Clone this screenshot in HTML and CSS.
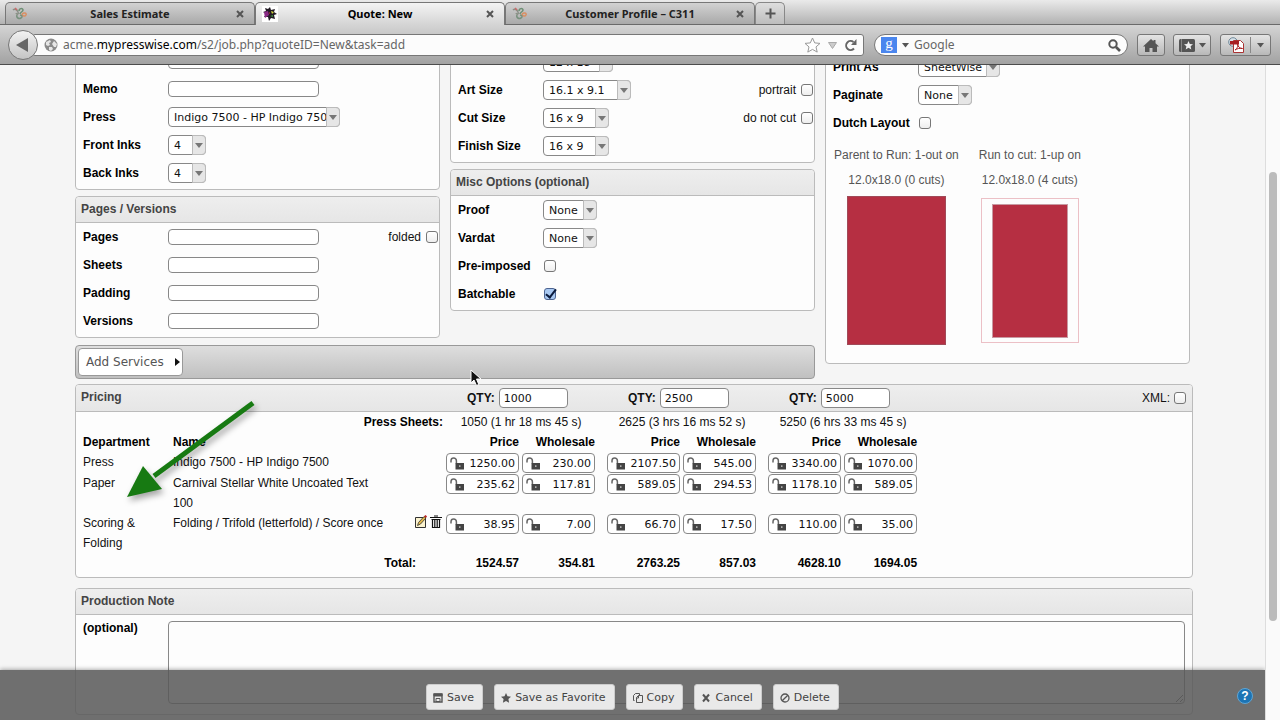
FILE: index.html
```html
<!DOCTYPE html>
<html lang="en">
<head>
<meta charset="utf-8">
<title>Quote: New</title>
<link rel="stylesheet" href="styles.css">
</head>
<body>
<svg class="defs" aria-hidden="true">
  <symbol id="lock" viewBox="0 0 14 13">
    <path d="M1 5.500V3.800a2.700 2.700 0 0 1 5.400 0V6.500" fill="none" stroke="#666" stroke-width="1.500"/>
    <path d="M5.500 6H14v6.500H5.500z" fill="#444"/>
    <path d="M9.200 8.200h1.200v1.800H9.200z" fill="#ccc"/>
  </symbol>
  <symbol id="swirl" viewBox="0 0 16 16">
    <g fill="none" stroke-width="1.500">
      <path d="M1 4c2-2 4 0 5 2s-1 3-2 1" stroke="#8a8f86"/>
      <path d="M7 5c0-3 4-3 4-1s-3 2-3 4" stroke="#6d8f74"/>
      <path d="M10 8c2-2 5-1 4 1s-4 1-4-1" stroke="#d98f62"/>
      <path d="M5 9c-1 3 2 4 4 3s1-3-1-3" stroke="#77907d"/>
      <path d="M3 2l2 2" stroke="#c66"/>
    </g>
  </symbol>
</svg>

<header class="browser">
  <nav class="tabs">
    <div class="tab">
      <svg class="fav" viewBox="0 0 16 16"><use href="#swirl"/></svg>
      <span class="tab-title">Sales Estimate</span>
      <button class="tab-close" aria-label="Close Sales Estimate"><svg viewBox="0 0 8 8"><path d="M1 1l6 6M7 1L1 7"/></svg></button>
    </div>
    <div class="tab active">
      <svg class="fav" viewBox="0 0 16 16"><path d="M0 0h16v16H0z" fill="#fff"/><path d="M3 2l3 1 2-2 1 3 4-1-1 3 3 2-3 1 1 4-4-1-2 3-1-4-4 0 2-3-3-2 3-1z" fill="#211a24"/><path d="M2 6l4-1 1 4-4 3z" fill="#8a2a86"/><path d="M9 5l3 1-2 2z" fill="#cfd23a"/><path d="M8 10l3-1 0 2z" fill="#3c8a3a"/><path d="M7 6l1 1-1 1z" fill="#d33"/></svg>
      <span class="tab-title">Quote: New</span>
      <button class="tab-close" aria-label="Close Quote: New"><svg viewBox="0 0 8 8"><path d="M1 1l6 6M7 1L1 7"/></svg></button>
    </div>
    <div class="tab">
      <svg class="fav" viewBox="0 0 16 16"><use href="#swirl"/></svg>
      <span class="tab-title">Customer Profile – C311</span>
      <button class="tab-close" aria-label="Close Customer Profile"><svg viewBox="0 0 8 8"><path d="M1 1l6 6M7 1L1 7"/></svg></button>
    </div>
    <button class="tab-new" aria-label="New tab"><svg viewBox="0 0 11 11"><path d="M5.500 0.500v10M.5 5.500h10"/></svg></button>
  </nav>
  <div class="toolbar">
    <button class="back" aria-label="Back"><svg viewBox="0 0 12 14"><path d="M12 0v14L0 7z" fill="#666"/></svg></button>
    <div class="address">
      <svg class="globe" viewBox="0 0 14 14"><circle cx="7" cy="7" r="6.500" fill="#8b8b8b"/><path d="M2 4l4-2 1 2-2 1 1 2-2 1-2-1zM8 6l2-3 3 3-1 3-2 0zM5 9l3 0 1 2-2 2-2-1z" fill="#e6e6e6"/></svg>
      <div class="url" role="textbox" aria-label="Address">acme.<b>mypresswise.com</b>/s2/job.php?quoteID=New&amp;task=add</div>
      <button class="plain" aria-label="Bookmark this page"><svg width="17" height="16" viewBox="0 0 17 16"><path d="M8.500 1l2.200 4.900 5.300.5-4 3.500 1.200 5.200-4.700-2.700-4.700 2.700L5 9.900 1 6.400l5.300-.5z" fill="#fff" stroke="#999"/></svg></button>
      <button class="plain" aria-label="Show history"><svg width="9" height="7" viewBox="0 0 9 7"><path d="M.5.5h8l-4 6z" fill="#ccc" stroke="#aaa"/></svg></button>
      <button class="plain" aria-label="Reload"><svg width="14" height="13" viewBox="0 0 14 13"><path d="M10 9.500A4.500 4.500 0 1 1 9.500 3" fill="none" stroke="#666" stroke-width="2"/><path d="M12.500 0v6H7z" fill="#666"/></svg></button>
    </div>
    <form class="search">
      <span class="g">g</span>
      <svg width="7" height="5" viewBox="0 0 7 5"><path d="M0 0h7L3.500 4.500z" fill="#555"/></svg>
      <input type="text" aria-label="Search" placeholder="Google">
      <button class="plain" type="button" aria-label="Go"><svg width="13" height="13" viewBox="0 0 13 13"><circle cx="5" cy="5" r="3.700" fill="none" stroke="#555" stroke-width="2"/><path d="M8 8l4 4" stroke="#555" stroke-width="2.600"/></svg></button>
    </form>
    <button class="tool home" aria-label="Home"><svg width="16" height="13" viewBox="0 0 16 13"><path d="M8 0l2.500 2.300V1h2v3.200L16 7.500h-2V13H9.500V9h-3v4H2V7.500H0z" fill="#555"/></svg></button>
    <button class="tool marks" aria-label="Bookmarks"><svg width="16" height="13" viewBox="0 0 16 13"><rect width="16" height="13" rx="1.500" fill="#555"/><path d="M2.500 0v13" stroke="#888"/><path d="M9.500 2l1.300 2.900 3.200.3-2.400 2.100.7 3.200-2.800-1.700-2.800 1.700.7-3.200L5 5.200l3.200-.3z" fill="#eee"/></svg><svg width="7" height="5" viewBox="0 0 7 5"><path d="M0 0h7L3.500 4.500z" fill="#555"/></svg></button>
    <button class="tool pdf" aria-label="PDF tools"><svg width="16" height="16" viewBox="0 0 16 16"><circle cx="5" cy="5" r="4.300" fill="#d7e2ea" stroke="#6f8797"/><path d="M5.500 3.500h7l3 3V15.500h-10z" fill="#fff" stroke="#a33"/><path d="M2 4h9v3.500H2z" fill="#a81e22"/><path d="M7 13c3-2 3-5 2.500-6 .5 3 2.500 4.500 5 4.500-3-.5-5 0-7.500 1.500z" fill="none" stroke="#a81e22"/></svg><i class="split"></i><svg width="7" height="5" viewBox="0 0 7 5"><path d="M0 0h7L3.500 4.500z" fill="#555"/></svg></button>
  </div>
</header>

<div class="viewport">
  <main class="page">
    <div class="content">
      <div class="columns">
        <div class="stack">
          <section class="panel">
            <div class="row"><span class="name"></span><input class="text" type="text" aria-label="Job name"></div>
            <div class="row"><label class="name" for="memo">Memo</label><input class="text" id="memo" type="text"></div>
            <div class="row"><label class="name" for="press">Press</label><span class="pick w-press"><select id="press"><option>Indigo 7500 - HP Indigo 7500</option></select></span></div>
            <div class="row"><label class="name" for="front">Front Inks</label><span class="pick w-ink"><select id="front"><option>4</option></select></span></div>
            <div class="row"><label class="name" for="backi">Back Inks</label><span class="pick w-ink"><select id="backi"><option>4</option></select></span></div>
          </section>
          <section class="panel">
            <h2>Pages / Versions</h2>
            <div class="row"><label class="name" for="pages">Pages</label><input class="text" id="pages" type="text"><label class="side" for="folded">folded</label><input id="folded" type="checkbox"></div>
            <div class="row"><label class="name" for="sheets">Sheets</label><input class="text" id="sheets" type="text"></div>
            <div class="row"><label class="name" for="padding">Padding</label><input class="text" id="padding" type="text"></div>
            <div class="row"><label class="name" for="versions">Versions</label><input class="text" id="versions" type="text"></div>
          </section>
        </div>

        <div class="stack">
          <section class="panel sizes">
            <div class="row"><span class="name"></span><span class="pick w-run"><select aria-label="Run size"><option>12 x 18</option></select></span></div>
            <div class="row"><label class="name" for="art">Art Size</label><span class="pick w-art"><select id="art"><option>16.1 x 9.1</option></select></span><label class="side" for="portrait">portrait</label><input id="portrait" type="checkbox"></div>
            <div class="row"><label class="name" for="cut">Cut Size</label><span class="pick w-cut"><select id="cut"><option>16 x 9</option></select></span><label class="side" for="nocut">do not cut</label><input id="nocut" type="checkbox"></div>
            <div class="row"><label class="name" for="finish">Finish Size</label><span class="pick w-cut"><select id="finish"><option>16 x 9</option></select></span></div>
          </section>
          <section class="panel">
            <h2>Misc Options (optional)</h2>
            <div class="row"><label class="name" for="proof">Proof</label><span class="pick w-none"><select id="proof"><option>None</option></select></span></div>
            <div class="row"><label class="name" for="vardat">Vardat</label><span class="pick w-none"><select id="vardat"><option>None</option></select></span></div>
            <div class="row"><label class="name" for="pre">Pre-imposed</label><input id="pre" type="checkbox"></div>
            <div class="row"><label class="name" for="batch">Batchable</label><input id="batch" type="checkbox" checked></div>
          </section>
        </div>

        <section class="panel imposition">
          <div class="row"><label class="name" for="printas">Print As</label><span class="pick w-print"><select id="printas"><option>SheetWise</option></select></span></div>
          <div class="row"><label class="name" for="paginate">Paginate</label><span class="pick w-none"><select id="paginate"><option>None</option></select></span></div>
          <div class="row"><label class="name" for="dutch">Dutch Layout</label><input id="dutch" type="checkbox"></div>
          <div class="diagrams">
            <figure><figcaption>Parent to Run: 1-out on<br>12.0x18.0 (0 cuts)</figcaption><div class="sheet-full"></div></figure>
            <figure><figcaption>Run to cut: 1-up on<br>12.0x18.0 (4 cuts)</figcaption><div class="sheet-cut"><div class="sheet-inner"></div></div></figure>
          </div>
        </section>

        <div class="services"><button>Add Services <svg width="5" height="8" viewBox="0 0 5 8"><path d="M0 0v8l5-4z" fill="#111"/></svg></button></div>
      </div>

      <section class="panel pricing">
        <div class="bar">
          <h2>Pricing</h2>
          <div class="qty"><label for="q1">QTY:</label><input id="q1" type="text" value="1000"></div>
          <div class="qty"><label for="q2">QTY:</label><input id="q2" type="text" value="2500"></div>
          <div class="qty"><label for="q3">QTY:</label><input id="q3" type="text" value="5000"></div>
          <div class="xml"><label for="xml">XML:</label><input id="xml" type="checkbox"></div>
        </div>
        <table>
          <colgroup><col class="c-dept"><col class="c-name"><col class="c-act"><col class="c-num"><col class="c-num"><col class="c-gap"><col class="c-num"><col class="c-num"><col class="c-gap"><col class="c-num"><col class="c-num"></colgroup>
          <tbody>
          <tr><th class="r" colspan="3">Press Sheets:</th><td class="mid" colspan="2">1050 (1 hr 18 ms 45 s)</td><td></td><td class="mid" colspan="2">2625 (3 hrs 16 ms 52 s)</td><td></td><td class="mid" colspan="2">5250 (6 hrs 33 ms 45 s)</td></tr>
          <tr><th>Department</th><th>Name</th><th></th><th class="r">Price</th><th class="r">Wholesale</th><th></th><th class="r">Price</th><th class="r">Wholesale</th><th></th><th class="r">Price</th><th class="r">Wholesale</th></tr>
          <tr><td>Press</td><td>Indigo 7500 - HP Indigo 7500</td><td></td>
            <td class="money"><span><svg><use href="#lock"/></svg><input aria-label="Press price 1" value="1250.00"></span></td><td class="money"><span><svg><use href="#lock"/></svg><input aria-label="Press wholesale 1" value="230.00"></span></td><td></td>
            <td class="money"><span><svg><use href="#lock"/></svg><input aria-label="Press price 2" value="2107.50"></span></td><td class="money"><span><svg><use href="#lock"/></svg><input aria-label="Press wholesale 2" value="545.00"></span></td><td></td>
            <td class="money"><span><svg><use href="#lock"/></svg><input aria-label="Press price 3" value="3340.00"></span></td><td class="money"><span><svg><use href="#lock"/></svg><input aria-label="Press wholesale 3" value="1070.00"></span></td></tr>
          <tr><td>Paper</td><td>Carnival Stellar White Uncoated Text 100</td><td></td>
            <td class="money"><span><svg><use href="#lock"/></svg><input aria-label="Paper price 1" value="235.62"></span></td><td class="money"><span><svg><use href="#lock"/></svg><input aria-label="Paper wholesale 1" value="117.81"></span></td><td></td>
            <td class="money"><span><svg><use href="#lock"/></svg><input aria-label="Paper price 2" value="589.05"></span></td><td class="money"><span><svg><use href="#lock"/></svg><input aria-label="Paper wholesale 2" value="294.53"></span></td><td></td>
            <td class="money"><span><svg><use href="#lock"/></svg><input aria-label="Paper price 3" value="1178.10"></span></td><td class="money"><span><svg><use href="#lock"/></svg><input aria-label="Paper wholesale 3" value="589.05"></span></td></tr>
          <tr><td>Scoring &amp; Folding</td><td>Folding / Trifold (letterfold) / Score once</td>
            <td class="actions"><div>
              <button class="plain" aria-label="Edit"><svg width="12" height="13" viewBox="0 0 12 13"><path d="M.5 2.500h10v10H.5z" fill="#fbf3cf" stroke="#333"/><path d="M2.500 10.500l1-3 5.500-6 2 1.500-5.500 6z" fill="#e0b64a" stroke="#333" stroke-width=".8"/><path d="M9 1.500L10.300 0 12 1.300 11 3z" fill="#b22"/></svg></button>
              <button class="plain" aria-label="Remove"><svg width="12" height="13" viewBox="0 0 12 13"><path d="M0 2.500h12M4 1h4M1.500 4.500h9M2.500 4.500v8h7v-8M4.800 5v7M7.200 5v7" fill="none" stroke="#111" stroke-width="1.200"/></svg></button>
            </div></td>
            <td class="money"><span><svg><use href="#lock"/></svg><input aria-label="Scoring price 1" value="38.95"></span></td><td class="money"><span><svg><use href="#lock"/></svg><input aria-label="Scoring wholesale 1" value="7.00"></span></td><td></td>
            <td class="money"><span><svg><use href="#lock"/></svg><input aria-label="Scoring price 2" value="66.70"></span></td><td class="money"><span><svg><use href="#lock"/></svg><input aria-label="Scoring wholesale 2" value="17.50"></span></td><td></td>
            <td class="money"><span><svg><use href="#lock"/></svg><input aria-label="Scoring price 3" value="110.00"></span></td><td class="money"><span><svg><use href="#lock"/></svg><input aria-label="Scoring wholesale 3" value="35.00"></span></td></tr>
          <tr><th class="r total" colspan="3">Total:</th><th class="r">1524.57</th><th class="r">354.81</th><th></th><th class="r">2763.25</th><th class="r">857.03</th><th></th><th class="r">4628.10</th><th class="r">1694.05</th></tr>
          </tbody>
        </table>
      </section>

      <section class="panel note">
        <h2>Production Note</h2>
        <div class="note-body"><label for="note">(optional)</label><textarea id="note"></textarea></div>
      </section>
    </div>

    <footer class="actions-bar">
      <button><svg viewBox="0 0 10 10"><path d="M1 1h8v8H1z" fill="none" stroke="#555" stroke-width="1.400"/><path d="M1 1h8v2H1z" fill="#555" stroke="#555"/><path d="M3 5.500h4v3H3z" fill="none" stroke="#555"/></svg>Save</button>
      <button><svg viewBox="0 0 10 10"><path d="M5 0l1.500 3.300 3.500.4-2.600 2.400.7 3.700L5 8 1.900 9.800l.7-3.700L0 3.700l3.500-.4z" fill="#555"/></svg>Save as Favorite</button>
      <button><svg viewBox="0 0 10 10"><path d="M1.500 7.500h-1v-5l2-2h4v2" fill="none" stroke="#555"/><path d="M5.500 2.500h4v7h-6v-5zM5.500 2.500v2.500H3.500" fill="none" stroke="#555"/></svg>Copy</button>
      <button><svg viewBox="0 0 10 10"><path d="M2 1.500l6 7M8 1.500l-6 7" stroke="#555" stroke-width="2"/></svg>Cancel</button>
      <button><svg viewBox="0 0 10 10"><circle cx="5" cy="5" r="4" fill="none" stroke="#555" stroke-width="1.300"/><path d="M2.200 7.800l5.600-5.600" stroke="#555" stroke-width="1.300"/></svg>Delete</button>
      <a class="help" href="#" aria-label="Help">?</a>
    </footer>
    <svg class="arrow" viewBox="0 0 140 110"><path d="M131 6L32 79" stroke="#177a12" stroke-width="5"/><path d="M5 100L21 69l19 23z" fill="#177a12"/></svg>
    <svg class="cursor" viewBox="0 0 12 18"><path d="M1 1v13l3-3 2.500 5.500 2.300-1L6.500 10H11z" fill="#111" stroke="#fff"/></svg>
  </main>
  <div class="scrollbar"><div class="thumb"></div></div>
</div>
</body>
</html>
```
FILE: styles.css
```css
*, *::before, *::after { box-sizing: border-box; }
html, body { height: 100%; }
body {
  margin: 0;
  display: flex;
  flex-direction: column;
  overflow: hidden;
  background: #f5f5f5;
  color: #111;
  font: 12px/20px "Liberation Sans", Arial, sans-serif;
}
button, input, select, textarea { font: inherit; color: inherit; margin: 0; padding: 0; }
svg { display: block; flex: none; }
.defs { position: absolute; width: 0; height: 0; }
.plain { border: 0; background: none; }

/* Browser window */
.browser { flex: none; font-family: "Noto Sans", "Open Sans", sans-serif; }
.tabs {
  display: flex;
  height: 25px;
  padding: 2px 0 0 5px;
  background: linear-gradient(#eaeaea, #b2b2b2);
  border-bottom: 1px solid #6a6a6a;
}
.tab {
  display: flex;
  align-items: center;
  flex: 0 1 250px;
  height: 22px;
  padding: 0 10px 0 6px;
  border: 1px solid #777;
  border-bottom: 0;
  border-radius: 5px 5px 0 0;
  background: linear-gradient(#d2d2d2, #a9a9a9);
}
.tab.active { height: 23px; background: linear-gradient(#f4f4f4, #d4d4d4); }
.fav { width: 16px; height: 16px; }
.tab-title { flex: 1; margin-right: 4px; text-align: center; font-size: 11px; font-weight: 700; color: #222; }
.tab.active .tab-title { color: #000; }
.tab-close { border: 0; background: none; }
.tab-close svg { width: 8px; height: 8px; stroke: #555; stroke-width: 2; }
.tab-new {
  display: flex;
  align-items: center;
  justify-content: center;
  width: 30px;
  border: 1px solid #888;
  border-bottom: 0;
  border-radius: 5px 5px 0 0;
  background: linear-gradient(#dedede, #bdbdbd);
}
.tab-new svg { width: 11px; height: 11px; stroke: #555; stroke-width: 2; }
.toolbar {
  display: flex;
  align-items: center;
  height: 40px;
  padding: 1px 9px 0 8px;
  background: linear-gradient(#d4d4d4, #a2a2a2);
  border-bottom: 1px solid #4c4c4c;
}
.back {
  display: flex;
  align-items: center;
  justify-content: center;
  width: 30px;
  height: 30px;
  padding-right: 3px;
  border: 1px solid #777;
  border-radius: 50%;
  background: linear-gradient(#f2f2f2, #c4c4c4);
  z-index: 1;
}
.back svg { width: 12px; height: 14px; }
.address {
  display: flex;
  align-items: center;
  flex: 1;
  gap: 7px;
  height: 22px;
  margin: 0 10px 0 -6px;
  padding: 0 5px 0 11px;
  border: 1px solid #777;
  border-radius: 3px;
  background: #fcfcfc;
}
.globe { width: 14px; height: 14px; }
.url { flex: 1; margin-left: -2px; color: #666; }
.url b { font-weight: 400; color: #000; }
.search {
  display: flex;
  align-items: center;
  gap: 5px;
  width: 254px;
  height: 22px;
  margin-right: 9px;
  padding: 0 6px;
  border: 1px solid #777;
  border-radius: 11px;
  background: #fcfcfc;
}
.search input { flex: 1; min-width: 0; border: 0; background: none; }
.search input::placeholder { color: #666; opacity: 1; }
.g { width: 16px; height: 16px; background: #4a86ee; color: #fff; font: 15px/12px "Liberation Serif", serif; text-align: center; }
.tool {
  display: flex;
  align-items: center;
  justify-content: center;
  gap: 6px;
  height: 22px;
  border: 1px solid #777;
  border-radius: 3px;
  background: linear-gradient(#e4e4e4, #b8b8b8);
}
.home { width: 28px; margin-right: 8px; }
.marks { width: 38px; margin-right: 9px; gap: 4px; }
.pdf { width: 51px; }
.split { width: 1px; height: 16px; background: #888; }

/* Scrolled page */
.viewport { flex: 1; min-height: 0; display: flex; }
.page { position: relative; flex: 1; min-width: 0; overflow: hidden; }
.content { margin-top: -19px; padding: 0 72px 0 75px; }
.scrollbar { width: 15px; padding: 107px 3px 0; background: #fafafa; border-left: 1px solid #ddd; }
.thumb { height: 82%; width: 8px; border-radius: 4px; background: #bbb; }

.columns {
  display: grid;
  grid-template-columns: 1fr 1fr 1fr;
  gap: 7px 10px;
  margin-right: 3px;
}
.stack { display: flex; flex-direction: column; gap: 6px; min-width: 0; }
.panel { border: 1px solid #bbb; border-radius: 4px; background: #fdfdfd; padding-bottom: 2px; }
.stack .panel { overflow: hidden; }
.sizes { padding-top: 1px; }
.imposition { grid-column: 3; grid-row: 1 / 3; align-self: start; padding: 6px 0 18px; }
.panel h2 {
  margin: 0;
  height: 26px;
  padding-left: 5px;
  border-bottom: 1px solid #bbb;
  border-radius: 3px 3px 0 0;
  background: linear-gradient(#eee, #e6e6e6);
  font-size: 12px;
  line-height: 24px;
  color: #444;
}
.row { display: flex; align-items: center; height: 28px; padding: 0 1px 0 7px; }
.name { width: 85px; padding-bottom: 1px; font-weight: 700; color: #000; }
.side { margin: 0 5px 0 auto; padding-bottom: 1px; }
.text { width: 151px; height: 16px; border: 1px solid #888; border-radius: 4px; background: #fff; }
.pick { position: relative; height: 20px; font: 11px/18px "DejaVu Sans", Verdana, sans-serif; }
.pick select {
  appearance: none;
  display: block;
  width: 100%;
  height: 20px;
  padding: 1px 13px 0 5px;
  border: 1px solid #888;
  border-radius: 4px;
  background: #fff;
}
.pick::before {
  content: "";
  position: absolute;
  top: 0;
  right: 0;
  width: 14px;
  height: 20px;
  border: 1px solid #bbb;
  border-radius: 0 4px 4px 0;
  background: #e6e6e6;
  pointer-events: none;
}
.pick::after {
  content: "";
  position: absolute;
  top: 8px;
  right: 3px;
  border: 4px solid transparent;
  border-top: 5px solid #777;
  border-bottom: 0;
  pointer-events: none;
}
.w-press { width: 172px; }
.w-ink { width: 38px; }
.w-run { width: 70px; }
.w-art { width: 88px; }
.w-cut { width: 66px; }
.w-none { width: 54px; }
.w-print { width: 82px; }

input[type="checkbox"] {
  appearance: none;
  flex: none;
  width: 12px;
  height: 12px;
  border: 1px solid #777;
  border-radius: 3px;
  background: linear-gradient(#fff, #eee);
}
.name + input[type="checkbox"] { margin-left: 1px; }
input[type="checkbox"]:checked { position: relative; background: #a9c9f2; border-color: #4d6491; }
input[type="checkbox"]:checked::after {
  content: "";
  position: absolute;
  left: 3px;
  top: -2px;
  width: 6px;
  height: 11px;
  border: solid #0b1b3d;
  border-width: 0 2px 2px 0;
  transform: rotate(38deg);
}

.diagrams { display: flex; gap: 20px; padding: 6px 0 0 8px; color: #555; line-height: 25px; text-align: center; }
.diagrams figure { margin: 0; display: flex; flex-direction: column; align-items: center; gap: 3px; }
.sheet-full { width: 99px; height: 149px; background: #b62f42; border: 1px solid #a04a58; }
.sheet-cut { width: 98px; height: 145px; margin-top: 2px; padding: 5px 10px 4px; border: 1px solid #ecc0c6; }
.sheet-inner { height: 100%; background: #b62f42; border: 1px solid #c89aa2; }

.services {
  grid-column: 1 / 3;
  padding: 2px;
  height: 34px;
  border: 1px solid #999;
  border-radius: 4px;
  background: linear-gradient(#dedede, #c0c0c0);
}
.services button {
  display: flex;
  align-items: center;
  gap: 11px;
  height: 28px;
  padding: 0 2px 0 7px;
  border: 1px solid #999;
  border-radius: 4px;
  background: #fff;
  font: 12px/20px "DejaVu Sans", Verdana, sans-serif;
  color: #555;
}

/* Pricing */
.pricing { margin-top: 5px; padding-bottom: 4px; }
.bar {
  display: grid;
  grid-template-columns: 391px 161px 161px 161px 1fr;
  align-items: center;
  height: 27px;
  border-bottom: 1px solid #bbb;
  border-radius: 3px 3px 0 0;
  background: linear-gradient(#eee, #e6e6e6);
}
.bar h2 { border: 0; background: none; }
.qty { display: flex; align-items: center; gap: 4px; font-weight: 700; }
.qty input {
  width: 69px;
  height: 20px;
  padding: 1px 4px 0;
  border: 1px solid #888;
  border-radius: 4px;
  background: #fff;
  font: 11px/18px "DejaVu Sans", Verdana, sans-serif;
}
.xml { display: flex; align-items: center; justify-content: flex-end; gap: 4px; padding-right: 6px; }
table { table-layout: fixed; width: 842px; border-collapse: collapse; }
td, th { padding: 0; text-align: left; vertical-align: top; font-weight: 400; }
th { font-weight: 700; color: #000; }
td:first-child, th:first-child { padding-left: 7px; }
.c-dept { width: 97px; }
.c-name { width: 215px; }
.c-act { width: 56px; }
.c-num { width: 76px; }
.c-gap { width: 9px; }
.r { text-align: right; padding-right: 1px; }
.total { padding-right: 28px; }
.mid { text-align: center; padding-left: 2px; }
.money { padding: 1px 1px 0 2px; }
.money span {
  display: flex;
  align-items: center;
  gap: 2px;
  height: 20px;
  padding: 1px 3px 0;
  border: 1px solid #888;
  border-radius: 4px;
  background: #fff;
}
.money svg { width: 14px; height: 13px; }
.money input {
  flex: 1;
  min-width: 0;
  width: 100%;
  border: 0;
  background: none;
  text-align: right;
  font: 11px/18px "DejaVu Sans", Verdana, sans-serif;
}
.actions div { display: flex; justify-content: flex-end; gap: 3px; padding: 2px 2px 0 0; }

/* Production note */
.note { margin-top: 10px; padding-bottom: 10px; }
.note-body { display: flex; padding: 6px 7px 0; font-weight: 700; color: #000; }
.note-body label { width: 85px; line-height: 14px; }
.note-body textarea { flex: 1; height: 83px; border: 1px solid #888; border-radius: 4px; background: #fdfdfd; font-weight: 400; }

.actions-bar {
  position: absolute;
  left: 0;
  right: 0;
  bottom: 0;
  display: flex;
  justify-content: center;
  gap: 11px;
  height: 50px;
  padding-top: 14px;
  background: rgba(88, 88, 88, .86);
  box-shadow: 0 -1px 4px rgba(0, 0, 0, .3);
}
.actions-bar button {
  display: flex;
  align-items: center;
  gap: 4px;
  height: 26px;
  padding: 1px 8px 0 6px;
  border: 1px solid #ccc;
  border-radius: 3px;
  background: #e9e9e9;
  color: #444;
  font: 11px/18px "DejaVu Sans", Verdana, sans-serif;
}
.actions-bar button svg { width: 10px; height: 10px; }
.help {
  position: absolute;
  right: 12px;
  top: 18px;
  width: 16px;
  height: 16px;
  border: 1px solid #5fa5d4;
  border-radius: 50%;
  background: #1c74b4;
  color: #fff;
  font-weight: 700;
  line-height: 14px;
  text-align: center;
  text-decoration: none;
}
.arrow { position: absolute; left: 122px; top: 332px; width: 140px; height: 110px; filter: drop-shadow(2px 4px 3px rgba(0, 0, 0, .35)); }
.cursor { position: absolute; left: 470px; top: 304px; width: 12px; height: 18px; }
```
